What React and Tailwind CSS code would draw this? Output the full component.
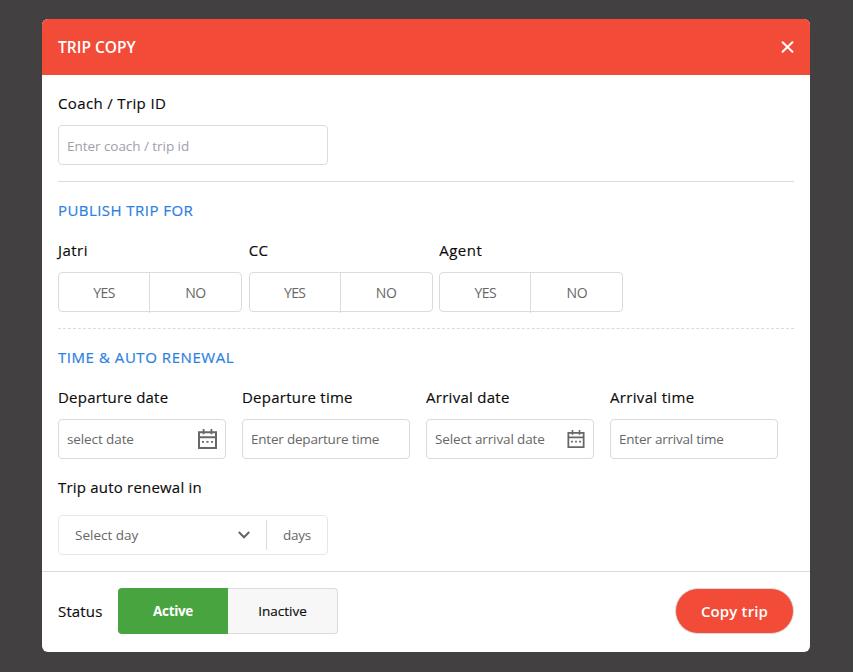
const label = "text-[15px] leading-6 font-medium text-[#0c0c0c] whitespace-nowrap [-webkit-text-stroke:0.15px]";
const heading = "text-[15px] leading-6 font-medium text-[#2b80df] [-webkit-text-stroke:0.2px]";
const field = "flex h-10 items-center rounded-[4px] border border-[#dbdbdb] px-2 text-[13.5px] whitespace-nowrap";

function Calendar({ className }) {
  return (
    <svg className={className} viewBox="0 0 19 20" fill="none" stroke="#676767">
      <path d="M1 3.2h17V19H1zM1 8.2h17" strokeWidth="2" />
      <path d="M5.6 0v5.2M13.4 0v5.2" strokeWidth="1.8" />
      <path d="M4 12.9h2M8.5 12.9h2M13 12.9h2" strokeWidth="1.8" />
    </svg>
  );
}

function YesNo({ title }) {
  return (
    <div className="w-[184px]">
      <div className={`${label} tracking-[0.45px]`}>{title}</div>
      <div className="mt-[10px] flex h-10 rounded-[4px] border border-[#dbdbdb] text-[14px] text-[#676767]">
        <div className="flex h-10 w-[91px] items-center justify-center border-r border-[#dbdbdb] pb-[2px]"><span className="tracking-[-0.6px]">YES</span></div>
        <div className="flex h-10 flex-1 items-center justify-center pb-[2px]"><span className="tracking-[-0.4px]">NO</span></div>
      </div>
    </div>
  );
}

function Field({ title, titleTracking, text, textTracking, children }) {
  return (
    <div className="w-[168px]">
      <div className={`${label} ${titleTracking}`}>{title}</div>
      <div className={`${field} mt-[10px] justify-between text-[#676767]`}>
        <span className={textTracking}>{text}</span>
        {children}
      </div>
    </div>
  );
}

export default function App() {
  return (
    <div className="h-[672px] w-[853px] overflow-hidden bg-[#434041] pt-[19px] pl-[42px] font-['Open_Sans','Noto_Sans',sans-serif]">
      <div className="flex h-[633px] w-[768px] flex-col overflow-hidden rounded-[6px] bg-white">
        <header className="flex h-14 shrink-0 items-center justify-between bg-[#f24b37] px-4 text-white">
          <h1 className="text-[15.5px] leading-6 font-semibold tracking-[0px]">TRIP COPY</h1>
          <svg className="h-3 w-[13px]" viewBox="0 0 13 12" stroke="white" strokeWidth="2" strokeLinecap="round">
            <path d="M1.6 1.2l9.8 9.6M11.4 1.2L1.6 10.8" />
          </svg>
        </header>

        <main className="flex h-[497px] shrink-0 flex-col border-b border-[#dbdbdb] px-4 pt-4">
          <div className={`${label} tracking-[0.36px]`}>Coach / Trip ID</div>
          <div className={`${field} mt-[10px] w-[270px] pt-[2px] tracking-[-0.05px] text-[#9d9fab]`}>
            <span>Enter coach / trip id</span>
          </div>

          <section className="mt-4 border-t border-[#dbdbdb] pt-4">
            <h2 className={`${heading} tracking-[0.44px]`}>PUBLISH TRIP FOR</h2>
            <div className="mt-4 grid w-[572px] grid-cols-3">
              <YesNo title="Jatri" />
              <YesNo title="CC" />
              <YesNo title="Agent" />
            </div>
          </section>

          <section className="mt-4 border-t border-dashed border-[#dbdbdb] pt-4">
            <h2 className={`${heading} tracking-[0.55px]`}>TIME &amp; AUTO RENEWAL</h2>
            <div className="mt-4 flex gap-4">
              <Field title="Departure date" titleTracking="tracking-[0.22px]" text="select date" textTracking="tracking-[-0.1px]">
                <Calendar className="h-5 w-[19px]" />
              </Field>
              <Field title="Departure time" titleTracking="tracking-[0.24px]" text="Enter departure time" textTracking="tracking-[-0.21px]" />
              <Field title="Arrival date" titleTracking="tracking-[0.28px]" text="Select arrival date" textTracking="tracking-[-0.12px]">
                <Calendar className="h-[18px] w-[18px]" />
              </Field>
              <Field title="Arrival time" titleTracking="tracking-[0.33px]" text="Enter arrival time" textTracking="tracking-[-0.22px]" />
            </div>
            <div className={`${label} mt-4 tracking-[0.2px]`}>Trip auto renewal in</div>
            <div className="mt-4 flex h-10 w-[270px] items-center rounded-[4px] border border-[#e7e7e7] text-[13.5px] text-[#676767]">
              <span className="ml-4">Select day</span>
              <svg className="ml-auto h-2 w-3" viewBox="0 0 12 8" fill="none" stroke="#676767" strokeWidth="2">
                <path d="M.8 1l5.2 5.3L11.2 1" />
              </svg>
              <div className="ml-4 flex h-[30px] w-[61px] items-center justify-center border-l border-[#dbdbdb] tracking-[-0.2px]">days</div>
            </div>
          </section>
        </main>

        <footer className="flex h-20 items-center px-4 pb-[2px]">
          <span className={`${label} w-[60px] tracking-[0.15px]`}>Status</span>
          <div className="flex h-[46px] w-[220px] text-[13.5px]">
            <div className="flex w-[110px] items-center justify-center rounded-l-[4px] bg-[#48a43f] font-bold tracking-[-0.35px] text-white">Active</div>
            <div className="flex w-[110px] items-center justify-center rounded-r-[4px] border border-l-0 border-[#dbdbdb] bg-[#f7f7f7] text-[#0c0c0c] [-webkit-text-stroke:0.15px]">Inactive</div>
          </div>
          <button className="ml-auto h-[46px] w-[119px] rounded-full border border-[#dbdbdb] bg-[#f24b37] text-[15px] leading-6 font-semibold tracking-[0.15px] text-white">Copy trip</button>
        </footer>
      </div>
    </div>
  );
}
